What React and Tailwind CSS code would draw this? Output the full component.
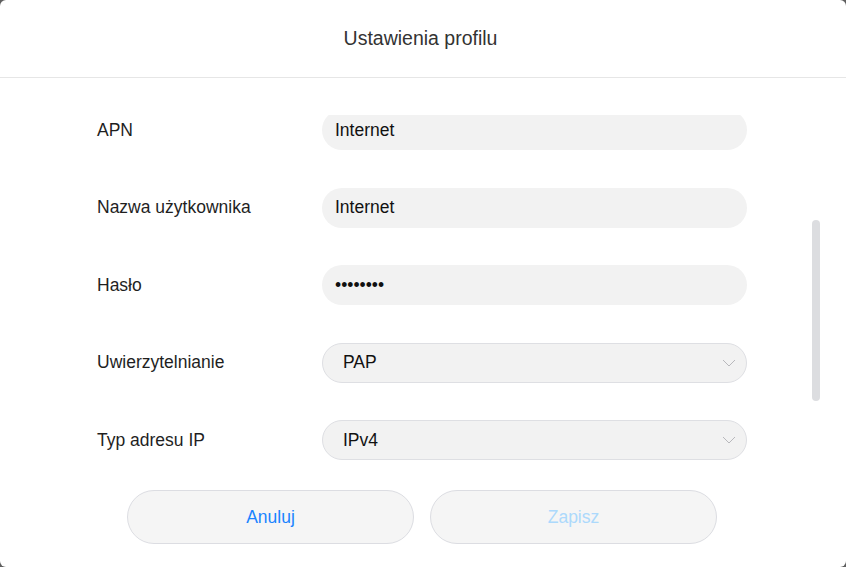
import React from 'react';

const fields = [
    { label: 'APN', value: 'Internet', type: 'input' },
    { label: 'Nazwa użytkownika', value: 'Internet', type: 'input' },
    { label: 'Hasło', value: '••••••••', type: 'input' },
    { label: 'Uwierzytelnianie', value: 'PAP', type: 'select' },
    { label: 'Typ adresu IP', value: 'IPv4', type: 'select' },
];

const Chevron = () => (
    <svg width="14" height="8" viewBox="0 0 14 8" fill="none">
        <path d="M1 1l6 6 6-6" stroke="#b8b8bc" strokeWidth="1" />
    </svg>
);

const App = () => {
    return (
        <div className="w-[846px] h-[567px] bg-[#5f5f5f] font-['Liberation_Sans',Arial,sans-serif]">
            <div className="relative w-full h-full bg-white rounded-[6px] flex flex-col overflow-hidden">
                {/* header */}
                <div className="h-[78px] flex items-center justify-center border-b border-[#e6e6e6] shrink-0">
                    <h2 className="text-[19.5px] text-[#333333] pr-[5px]">Ustawienia profilu</h2>
                </div>

                {/* scrolled form */}
                <div className="mt-[37px] h-[355px] overflow-hidden">
                    <div className="-mt-[5px] flex flex-col gap-[37.5px]">
                        {fields.map((f) => (
                            <div key={f.label} className="flex items-center h-10 pl-[97px]">
                                <div className="w-[225px] text-[17.5px] text-[#1f1f1f]">{f.label}</div>
                                {f.type === 'input' ? (
                                    <div className="w-[425px] h-10 rounded-full bg-[#f2f2f2] flex items-center pl-[13px] text-[17.5px] text-[#111111]">
                                        {f.value}
                                    </div>
                                ) : (
                                    <div className="w-[425px] h-10 rounded-full bg-[#f2f2f2] border border-[#dedfe3] flex items-center justify-between pl-[20px] pr-[10px] text-[17.5px] text-[#111111]">
                                        <span>{f.value}</span>
                                        <Chevron />
                                    </div>
                                )}
                            </div>
                        ))}
                    </div>
                </div>

                {/* buttons */}
                <div className="flex justify-center gap-4 mt-[20px] pr-[2px]">
                    <button className="w-[287px] h-[54px] rounded-full bg-[#f5f5f5] border border-[#dcdde2] text-[17.5px] text-[#1a84ff]">Anuluj</button>
                    <button className="w-[287px] h-[54px] rounded-full bg-[#f5f5f5] border border-[#dcdde2] text-[17.5px] text-[#acd9fc]">Zapisz</button>
                </div>

                {/* scrollbar */}
                <div className="absolute left-[812px] top-[220px] w-[8px] h-[181px] rounded-full bg-[#dcdde0]"></div>
            </div>
        </div>
    );
};

export default App;
